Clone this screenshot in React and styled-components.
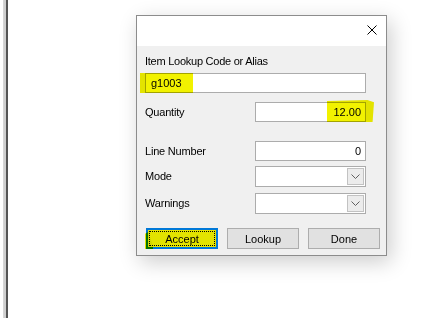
import React from "react";
import styled, { createGlobalStyle } from "styled-components";

const Global = createGlobalStyle`
  html, body { margin: 0; padding: 0; background: #fff; }
  body { font-family: "Liberation Sans", Arial, sans-serif; font-size: 11px; color: #000; }
`;

const Desktop = styled.div`
  position: relative;
  width: 437px;
  height: 318px;
  overflow: hidden;
  display: flex;
  background: #fff;
`;

const Rail = styled.div`
  flex: none;
  width: 8px;
  height: 100%;
  background: linear-gradient(to right, #fff 0 3px, #d6d6d6 3px 4px, #cfcfcf 4px 6px, #555 6px 8px);
`;

const Dialog = styled.div`
  position: absolute;
  left: 136px;
  top: 15px;
  width: 251px;
  height: 241px;
  box-sizing: border-box;
  border: 1px solid #8c8c8c;
  background: #f0f0f0;
  box-shadow: 4px 6px 20px rgba(0, 0, 0, 0.2);
`;

const TitleBar = styled.div`
  height: 30px;
  background: #fff;
  display: flex;
  justify-content: flex-end;
  align-items: flex-start;
  padding: 9px 9px 0 0;
  box-sizing: border-box;
`;

const Body = styled.div`
  padding: 8px 0 0 8px;
`;

const Caption = styled.div`
  height: 14px;
  line-height: 14px;
  letter-spacing: -0.25px;
  margin-bottom: 5px;
`;

const Box = styled.div`
  box-sizing: border-box;
  width: ${(p) => p.$w}px;
  height: ${(p) => p.$h || 20}px;
  background: #fff;
  border: 1px solid #acacac;
  display: flex;
  align-items: center;
  justify-content: ${(p) => (p.$right ? "flex-end" : "flex-start")};
  padding: ${(p) => (p.$right ? "0 4px 0 0" : "0 0 0 5px")};
  line-height: 14px;
`;

const Combo = styled(Box)`
  padding: 0 1px 0 0;
  justify-content: flex-end;
`;

const DropButton = styled.div`
  box-sizing: border-box;
  width: 17px;
  height: 17px;
  border: 1px solid #c2c2c2;
  background: #ececec;
  display: flex;
  align-items: center;
  justify-content: center;
`;

const Row = styled.div`
  display: grid;
  grid-template-columns: 110px 111px;
  align-items: center;
  margin-top: ${(p) => p.$mt}px;
`;

const Label = styled.div`
  line-height: 14px;
  letter-spacing: -0.2px;
  padding-bottom: 1px;
`;

const Buttons = styled.div`
  display: flex;
  gap: 9px;
  padding-left: 1px;
  margin-top: 14px;
`;

const Button = styled.div`
  box-sizing: border-box;
  width: 72px;
  height: 21px;
  display: flex;
  align-items: center;
  justify-content: center;
  background: ${(p) => (p.$primary ? "#e3e300" : "#e1e1e1")};
  border: ${(p) => (p.$primary ? "2px solid #0078d7" : "1px solid #adadad")};
  outline: ${(p) => (p.$primary ? "1px dotted #000" : "none")};
  outline-offset: -4px;
  line-height: 14px;
`;

const Marker = styled.div`
  position: absolute;
  left: ${(p) => p.$x}px;
  top: ${(p) => p.$y}px;
  width: ${(p) => p.$w}px;
  height: ${(p) => p.$h}px;
  background: #f2f200;
  mix-blend-mode: multiply;
  clip-path: ${(p) => p.$clip || "none"};
  pointer-events: none;
`;

const CloseIcon = () => (
  <svg width="10" height="10" viewBox="0 0 10 10">
    <path d="M0.5 0.5 L9.5 9.5 M9.5 0.5 L0.5 9.5" stroke="#000" strokeWidth="1" fill="none" />
  </svg>
);

const Chevron = () => (
  <svg width="9" height="5" viewBox="0 0 9 5">
    <path d="M0.5 0.5 L4.5 4.5 L8.5 0.5" stroke="#606060" strokeWidth="1" fill="none" />
  </svg>
);

export default function App() {
  return (
    <>
      <Global />
      <Desktop>
        <Rail />
        <Dialog>
          <TitleBar>
            <CloseIcon />
          </TitleBar>
          <Body>
            <Caption>Item Lookup Code or Alias</Caption>
            <Box $w={221}>g1003</Box>
            <Row $mt={9}>
              <Label>Quantity</Label>
              <Box $w={111} $right>12.00</Box>
            </Row>
            <Row $mt={19}>
              <Label>Line Number</Label>
              <Box $w={111} $right>0</Box>
            </Row>
            <Row $mt={5}>
              <Label>Mode</Label>
              <Combo $w={111} $h={21}>
                <DropButton><Chevron /></DropButton>
              </Combo>
            </Row>
            <Row $mt={6}>
              <Label>Warnings</Label>
              <Combo $w={111} $h={21}>
                <DropButton><Chevron /></DropButton>
              </Combo>
            </Row>
            <Buttons>
              <Button $primary>Accept</Button>
              <Button>Lookup</Button>
              <Button>Done</Button>
            </Buttons>
          </Body>
          <Marker $x={3} $y={57} $w={53} $h={20} />
          <Marker $x={190} $y={84} $w={47} $h={22} $clip="polygon(0 4%, 86% 0, 100% 10%, 97% 100%, 0 100%)" />
          <Marker $x={8} $y={216} $w={8} $h={17} $clip="polygon(0 10%, 40% 0, 100% 80%, 100% 100%, 0 100%)" />
        </Dialog>
      </Desktop>
    </>
  );
}
